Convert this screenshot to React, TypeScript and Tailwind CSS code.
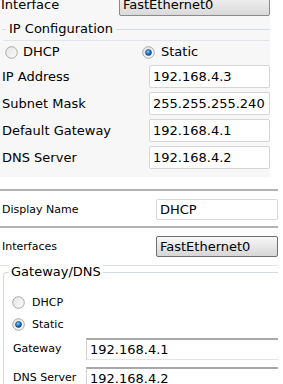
import React from "react";

function Radio({ checked }: { checked?: boolean }) {
  return (
    <svg width="13" height="13" viewBox="0 0 13 13" className="shrink-0">
      <defs>
        <linearGradient id="rg" x1="0" y1="0" x2="1" y2="1">
          <stop offset="0" stopColor="#e4e4e4" />
          <stop offset="1" stopColor="#fbfbfb" />
        </linearGradient>
        <radialGradient id="bd" cx="0.4" cy="0.35" r="0.7">
          <stop offset="0" stopColor="#8fd0ff" />
          <stop offset="0.5" stopColor="#1f7fcf" />
          <stop offset="1" stopColor="#0d3f78" />
        </radialGradient>
      </defs>
      <circle cx="6.5" cy="6.5" r="5.8" fill="url(#rg)" stroke="#a9a9a9" strokeWidth="1" />
      {checked && <circle cx="6.5" cy="6.5" r="3" fill="url(#bd)" stroke="#1a3b5f" strokeWidth="0.6" />}
    </svg>
  );
}

function TopField({ label, value }: { label: string; value: string }) {
  return (
    <div className="flex h-[23px] items-center">
      <div className="w-[149px] pl-[2px]">{label}</div>
      <div className="flex h-full w-[121px] items-center rounded-[2px] border border-[#d6d6d6] bg-white pl-[3px]">
        {value}
      </div>
    </div>
  );
}

export default function App() {
  return (
    <div className="h-[384px] w-[283px] overflow-hidden bg-white font-['DejaVu_Sans',sans-serif] text-[13px] leading-[16px] text-black">
      {/* top panel */}
      <div className="flex h-[177px] w-[270px] flex-col bg-[#f7f7f7]">
        <div className="-mt-[6px] flex h-[22px] items-center">
          <div className="w-[119px] pl-[1px]">Interface</div>
          <div className="flex h-full flex-1 items-center rounded-[2px] border border-[#8a8a8a] bg-gradient-to-b from-[#f4f4f4] to-[#d9d9d9] pl-[3px]">
            FastEthernet0
          </div>
        </div>
        <div className="mt-[5px] flex h-[16px] items-center">
          <div className="ml-[2px] h-px w-[4px] bg-[#d3dbe3]" />
          <div className="px-[3px]">IP Configuration</div>
          <div className="h-px flex-1 bg-[#d3dbe3]" />
        </div>
        <div className="mt-[3px] ml-[3px] h-px bg-[#dfe5ea]" />
        <div className="mt-[4px] flex h-[14px] items-center">
          <div className="ml-[5px] flex w-[137px] items-center">
            <Radio />
            <span className="ml-[5px]">DHCP</span>
          </div>
          <Radio checked />
          <span className="ml-[6px]">Static</span>
        </div>
        <div className="mt-[6px] flex flex-col gap-[4px]">
          <TopField label="IP Address" value="192.168.4.3" />
          <TopField label="Subnet Mask" value="255.255.255.240" />
          <TopField label="Default Gateway" value="192.168.4.1" />
          <TopField label="DNS Server" value="192.168.4.2" />
        </div>
      </div>

      {/* bottom panel */}
      <div className="flex w-[278px] flex-col">
        <div className="mt-[12px] h-[2px] bg-[#b3b3b3]" />
        <div className="mt-[8px] flex h-[21px] items-center">
          <div className="w-[156px] pl-[2px] text-[11px]">Display Name</div>
          <div className="flex h-full flex-1 items-center rounded-[2px] border border-[#d9d9d9] bg-white pl-[3px]">
            DHCP
          </div>
        </div>
        <div className="mt-[6px] h-[2px] bg-[#b3b3b3]" />
        <div className="mt-[8px] flex h-[21px] items-center">
          <div className="w-[156px] pl-[2px] text-[11px]">Interfaces</div>
          <div className="flex h-full flex-1 items-center rounded-[2px] border border-[#6f6f6f] bg-gradient-to-b from-[#f7f7f7] to-[#d6d6d6] pl-[3px]">
            FastEthernet0
          </div>
        </div>
        <div className="mt-[8px] h-px bg-[#e0e4e9]" />
        <div className="relative mt-[6px] ml-[3px] flex flex-col rounded-tl-[4px] border-l border-t border-[#d3dae2] pb-[40px]">
          <div className="absolute -top-[9px] left-[5px] bg-white px-[2px]">Gateway/DNS</div>
          <div className="mt-[23px] ml-[8px] flex h-[13px] items-center text-[11px]">
            <Radio />
            <span className="ml-[7px]">DHCP</span>
          </div>
          <div className="mt-[9px] ml-[8px] flex h-[13px] items-center text-[11px]">
            <Radio checked />
            <span className="ml-[7px]">Static</span>
          </div>
          <div className="mt-[7px] flex h-[22px] items-center">
            <div className="ml-[9px] w-[73px] text-[11px]">Gateway</div>
            <div className="flex h-full flex-1 items-center border-t-2 border-l border-b border-t-[#a9a9a9] border-l-[#d0d0d0] border-b-[#e4e4e4] bg-white pl-[3px]">
              192.168.4.1
            </div>
          </div>
          <div className="mt-[7px] flex h-[22px] items-center">
            <div className="ml-[9px] w-[73px] text-[11px]">DNS Server</div>
            <div className="flex h-full flex-1 items-center border-t-2 border-l border-b border-t-[#a9a9a9] border-l-[#d0d0d0] border-b-[#e4e4e4] bg-white pl-[3px]">
              192.168.4.2
            </div>
          </div>
        </div>
      </div>
    </div>
  );
}
